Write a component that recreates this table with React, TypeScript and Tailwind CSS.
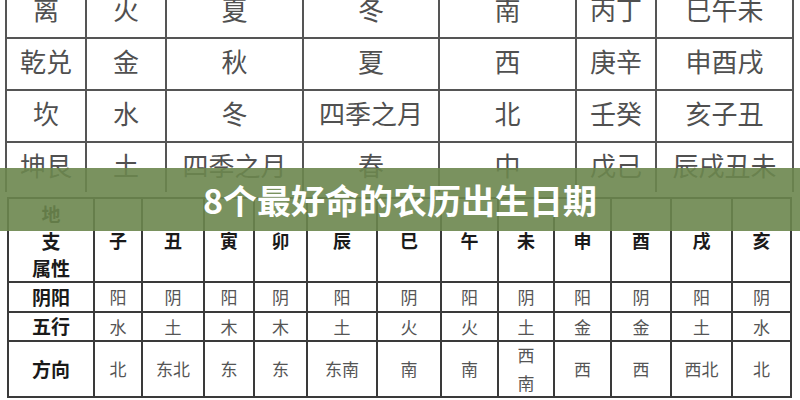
const font = { fontFamily: '"Noto Sans CJK SC", "Noto Sans", sans-serif' };

const topRows = [
    ["离", "火", "夏", "冬", "南", "丙丁", "巳午未"],
    ["乾兑", "金", "秋", "夏", "西", "庚辛", "申酉戌"],
    ["坎", "水", "冬", "四季之月", "北", "壬癸", "亥子丑"],
    ["坤艮", "土", "四季之月", "春", "中", "戊己", "辰戌丑未"],
];

const branches = ["子", "丑", "寅", "卯", "辰", "巳", "午", "未", "申", "酉", "戌", "亥"];
const yinyang = ["阳", "阴", "阳", "阴", "阳", "阴", "阳", "阴", "阳", "阴", "阳", "阴"];
const wuxing = ["水", "土", "木", "木", "土", "火", "火", "土", "金", "金", "土", "水"];
const fangxiang = ["北", "东北", "东", "东", "东南", "南", "南", "西\n南", "西", "西", "西北", "北"];

function TopTable() {
    return (
        <div className="ml-[5px] mt-[-13px] grid w-[787px] grid-cols-[80px_80px_137px_136px_137px_80px_137px] border-l-2 border-[#555]">
            {topRows.map((row, r) =>
                row.map((cell, c) => (
                    <div
                        key={`${r}-${c}`}
                        className={`flex items-start justify-center border-r-2 border-[#555] pt-[7px] text-[26px] leading-[30px] text-[#505050] ${
                            r < 3 ? "h-[52px] border-b-2" : "h-[49px]"
                        }`}
                    >
                        {cell}
                    </div>
                ))
            )}
        </div>
    );
}

function BottomTable() {
    const cell = "flex items-center justify-center border-r-2 border-b-2 border-[#3a3a3a] text-center";
    return (
        <div className="ml-[7px] mt-[5px] grid w-[785px] grid-cols-[86px_48px_62px_50px_53px_70px_64px_57px_56px_57px_60px_61px_59px] border-l-2 border-t-2 border-[#3a3a3a]">
            {/* header */}
            <div className={`${cell} h-[84px] flex-col text-[19px] font-bold leading-[27px] text-[#1a1a1a]`}>
                <span>地</span>
                <span>支</span>
                <span>属性</span>
            </div>
            {branches.map((b) => (
                <div key={b} className={`${cell} h-[84px] text-[18px] font-bold text-[#1a1a1a]`}>
                    {b}
                </div>
            ))}

            <div className={`${cell} h-[30px] text-[19px] font-bold text-[#1a1a1a]`}>阴阳</div>
            {yinyang.map((v, i) => (
                <div key={`yy${i}`} className={`${cell} h-[30px] text-[17px] text-[#555]`}>
                    {v}
                </div>
            ))}

            <div className={`${cell} h-[29px] text-[19px] font-bold text-[#1a1a1a]`}>五行</div>
            {wuxing.map((v, i) => (
                <div key={`wx${i}`} className={`${cell} h-[29px] text-[17px] text-[#555]`}>
                    {v}
                </div>
            ))}

            <div className={`${cell} h-[56px] text-[19px] font-bold text-[#1a1a1a]`}>方向</div>
            {fangxiang.map((v, i) => (
                <div key={`fx${i}`} className={`${cell} h-[56px] whitespace-pre-line text-[17px] leading-[28px] text-[#555]`}>
                    {v}
                </div>
            ))}
        </div>
    );
}

export default function App() {
    return (
        <div className="relative h-[400px] w-[800px] overflow-hidden bg-white" style={font}>
            <TopTable />
            <BottomTable />

            {/* title banner over the picture */}
            <div className="absolute left-0 top-[168px] flex h-[63px] w-[800px] items-center justify-center bg-[rgba(107,134,78,0.9)]">
                <h1 className="text-[34px] font-bold leading-none text-white">8个最好命的农历出生日期</h1>
            </div>
        </div>
    );
}
